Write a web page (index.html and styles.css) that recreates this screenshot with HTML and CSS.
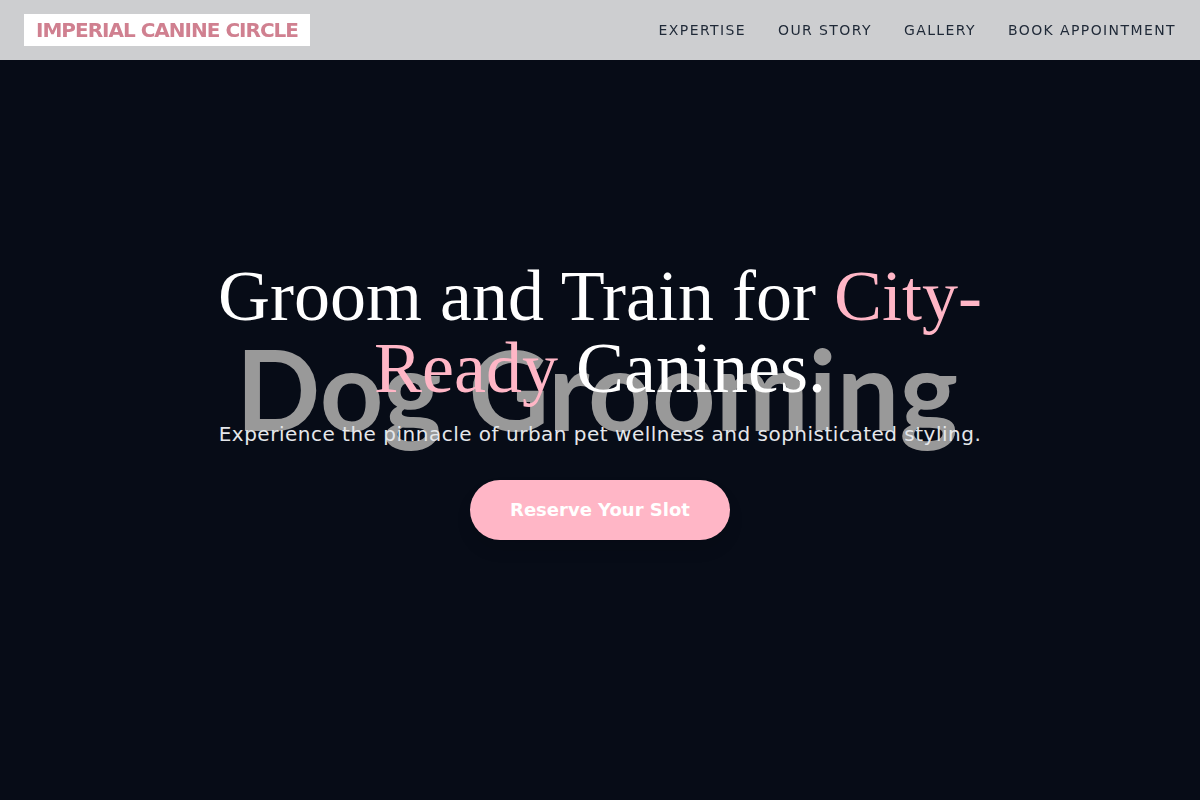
FILE: index.html
```html
<!DOCTYPE html>
<html lang="en">
<head>
    <meta charset="UTF-8">
    <meta name="viewport" content="width=device-width, initial-scale=1.0">
    <title>Imperial Canine Circle</title>
    <link rel="stylesheet" href="styles.css">
</head>
<body>
    <header class="header">
        <a href="#home" class="logo">IMPERIAL CANINE CIRCLE</a>
        <nav class="nav">
            <a href="#expertise">Expertise</a>
            <a href="#story">Our Story</a>
            <a href="#gallery">Gallery</a>
            <a href="#book">Book Appointment</a>
        </nav>
    </header>

    <section class="hero" id="home">
        <div class="hero-bg">Dog Grooming</div>
        <div class="hero-content">
            <h1>Groom and Train for <span class="pink">City-Ready</span> Canines.</h1>
            <p>Experience the pinnacle of urban pet wellness and sophisticated styling.</p>
            <a href="#book" class="btn">Reserve Your Slot</a>
        </div>
    </section>
</body>
</html>
```
FILE: styles.css
```css
* {
    margin: 0;
    padding: 0;
    box-sizing: border-box;
}
body {
    font-family: "DejaVu Sans", sans-serif;
    background: #070c17;
}
a {
    text-decoration: none;
}

/* header */
.header {
    position: fixed;
    top: 0;
    left: 0;
    right: 0;
    z-index: 10;
    display: flex;
    justify-content: space-between;
    align-items: center;
    min-height: 60px;
    padding: 0 24px;
    background: rgba(255, 255, 255, 0.8);
}
.logo {
    padding: 0 12px;
    background: #fff;
    color: #d08090;
    font-size: 20px;
    font-weight: bold;
    line-height: 32px;
    letter-spacing: -0.05em;
}
.nav {
    display: flex;
    gap: 32px;
}
.nav a {
    color: #1f2937;
    font-size: 14px;
    line-height: 20px;
    letter-spacing: 0.1em;
    text-transform: uppercase;
}

/* hero */
.hero {
    display: grid;
    place-items: center;
    min-height: 100vh;
}
.hero-bg,
.hero-content {
    grid-area: 1 / 1;
}
.hero-bg {
    padding: 0 6px 24px 0;
    color: #999;
    font-family: Lato, sans-serif;
    font-size: 111px;
    font-weight: bold;
    line-height: 136px;
    white-space: nowrap;
}
.hero-content {
    z-index: 1;
    max-width: 896px;
    padding: 0 24px;
    text-align: center;
}
.hero h1 {
    margin-bottom: 16px;
    color: #fff;
    font-family: "Liberation Serif", serif;
    font-size: 72px;
    font-weight: normal;
    line-height: 72px;
}
.hero .pink {
    color: #ffb6c6;
}
.hero p {
    margin-bottom: 32px;
    color: #e5e7eb;
    font-size: 20px;
    line-height: 28px;
    letter-spacing: 0.025em;
}
.btn {
    display: inline-block;
    padding: 16px 40px;
    border-radius: 30px;
    background: #ffb6c6;
    color: #fff;
    font-size: 18px;
    font-weight: bold;
    line-height: 28px;
    vertical-align: top;
    box-shadow: 0 10px 15px rgba(0, 0, 0, 0.1);
}
```
